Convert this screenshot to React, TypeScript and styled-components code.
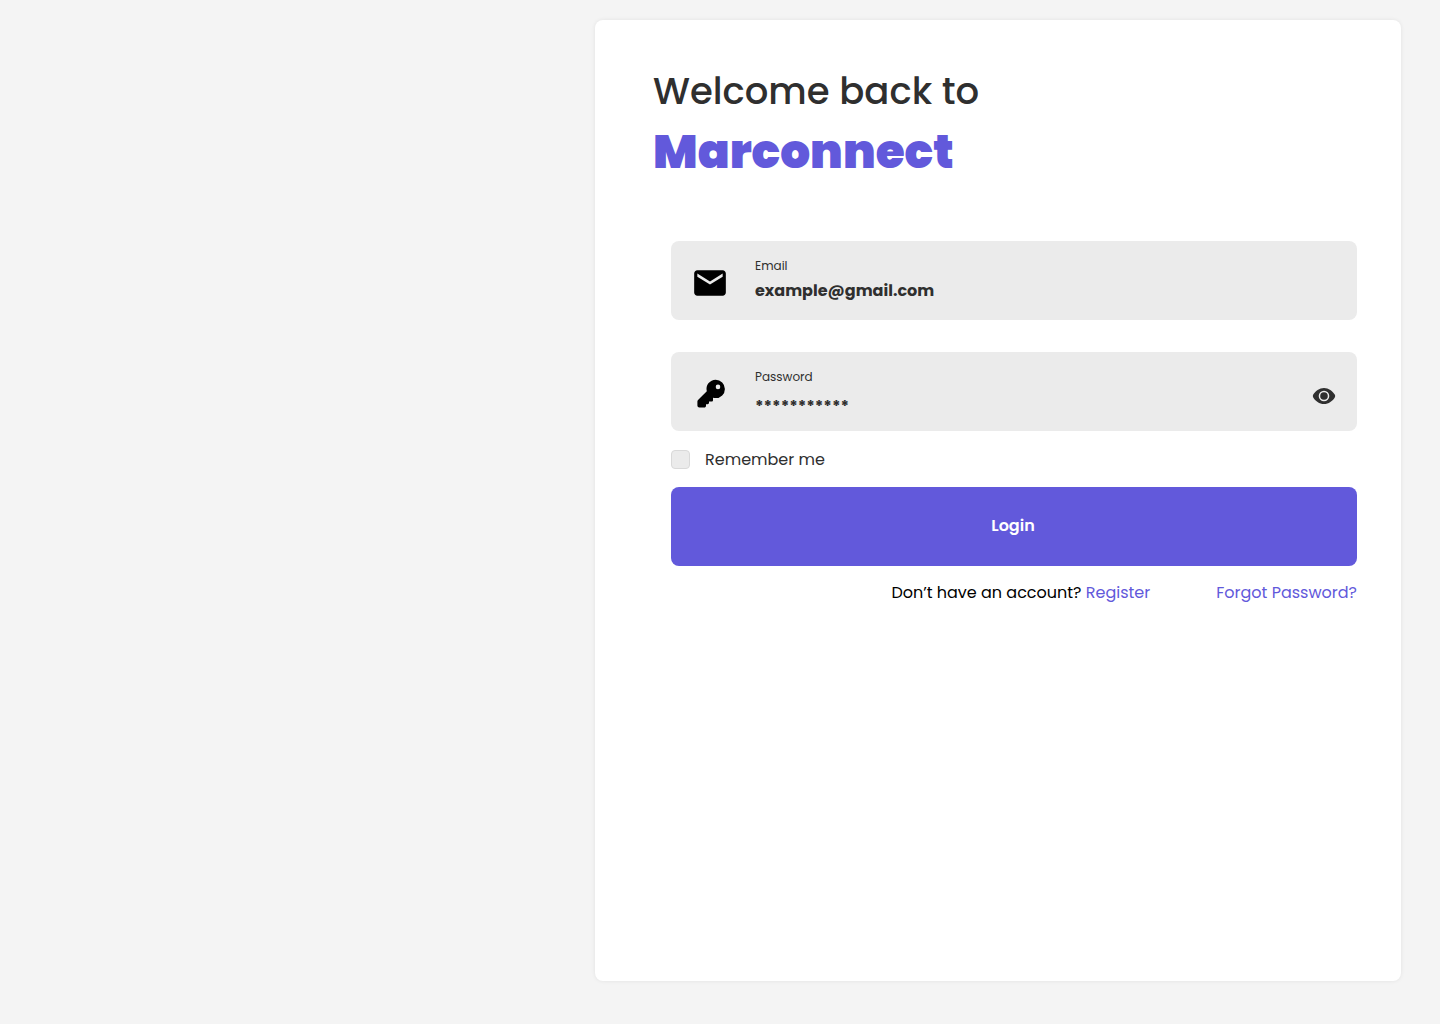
import React, { useId, useState } from "react";
import styled, { createGlobalStyle } from "styled-components";
import { MdEmail } from "react-icons/md";

const color = {
  page: "#f4f4f4",
  card: "#ffffff",
  field: "#ebebeb",
  ink: "#2f2f2f",
  accent: "#6259db",
};

const GlobalStyle = createGlobalStyle`
  *, *::before, *::after { box-sizing: border-box; }
  body {
    margin: 0;
    background: ${color.page};
    color: ${color.ink};
    font-family: Poppins, Inter, "Open Sans", sans-serif;
    font-size: 16px;
    line-height: 24px;
  }
`;

const Page = styled.main`
  display: flex;
  justify-content: flex-end;
  min-height: 100vh;
  padding: 20px 39px 43px 20px;
`;

const Card = styled.section`
  flex: 0 1 806px;
  padding: 44px 44px 44px 58px;
  border-radius: 8px;
  background: ${color.card};
  box-shadow: 0 0 4px rgba(0, 0, 0, 0.08);
`;

const Title = styled.h1`
  margin: 0;
  font-size: 37px;
  font-weight: 500;
  line-height: 54px;
`;

const Brand = styled.span`
  display: block;
  color: ${color.accent};
  font-size: 47px;
  font-weight: 900;
  line-height: 68px;
`;

const Form = styled.form`
  display: flex;
  flex-direction: column;
  margin: 55px 0 0 18px;
`;

const FieldBox = styled.div`
  display: flex;
  align-items: center;
  height: 79px;
  margin-bottom: 32px;
  padding: 0 21px 0 20px;
  border-radius: 8px;
  background: ${color.field};

  & + & {
    margin-bottom: 16px;
  }
`;

const FieldIcon = styled.span`
  display: flex;
  flex: none;
  justify-content: center;
  width: 38px;
  margin-right: 26px;
  padding-top: 4px;
  color: #000000;
`;

const FieldBody = styled.div`
  display: flex;
  flex: 1;
  flex-direction: column;
  min-width: 0;
`;

const FieldLabel = styled.label`
  font-size: 12px;
  line-height: 20px;
`;

const FieldInput = styled.input`
  width: 100%;
  height: 30px;
  padding: 0;
  border: 0;
  outline: 0;
  background: transparent;
  color: ${color.ink};
  font: inherit;
  font-weight: 700;

  &::placeholder {
    color: ${color.ink};
    opacity: 1;
  }

  &[placeholder^="*"] {
    padding-top: 10px;
  }
`;

const EyeButton = styled.button`
  display: flex;
  flex: none;
  padding: 8px 0 0;
  border: 0;
  background: none;
  color: ${color.ink};
  cursor: pointer;
`;

const Remember = styled.label`
  display: flex;
  align-items: flex-start;
  align-self: flex-start;
  gap: 15px;
  margin-bottom: 16px;
  line-height: 24px;
`;

const RememberText = styled.span`
  padding-top: 1px;
  line-height: 23px;
`;

const Tick = styled.input`
  appearance: none;
  width: 19px;
  height: 19px;
  margin: 3px 0 0;
  border: 1px solid #d9d9d9;
  border-radius: 4px;
  background: ${color.field};

  &:checked {
    background: ${color.accent};
  }
`;

const LoginButton = styled.button`
  height: 79px;
  padding: 0 2px 2px 0;
  border: 0;
  border-radius: 8px;
  background: ${color.accent};
  color: #ffffff;
  font: inherit;
  font-weight: 600;
  cursor: pointer;
`;

const Links = styled.div`
  display: flex;
  flex-wrap: wrap;
  justify-content: flex-end;
  gap: 8px 66px;
  margin-top: 15px;
  color: #000000;
`;

const TextLink = styled.a`
  color: ${color.accent};
  text-decoration: none;
`;

function KeyIcon() {
  return (
    <svg width="32" height="32" viewBox="0 0 32 32" fill="currentColor" aria-hidden="true">
      <path
        fillRule="evenodd"
        d="M21.700 1.700a9.200 9.200 0 0 0-8.900 11.600L4 22.100c-.4.4-.6.9-.6 1.500v3.900c0 1.100.9 2 2 2h4.800c1.100 0 1.800-.8 1.800-1.800v-1.500h1.600c.8 0 1.400-.6 1.400-1.400v-1.200h2.600c.8 0 1.400-.6 1.400-1.400v-2.400c.8.200 1.700.300 2.700.300a9.200 9.200 0 0 0 0-18.400Zm2.300 4.900a2.300 2.300 0 1 1 0 4.600 2.300 2.300 0 0 1 0-4.600Z"
      />
    </svg>
  );
}

function EyeIcon() {
  return (
    <svg width="24" height="24" viewBox="0 0 24 24" fill="currentColor" aria-hidden="true">
      <path
        fillRule="evenodd"
        d="M12 4C7.400 4 3.300 7 1.100 10.800c-.4.700-.4 1.700 0 2.400C3.300 17 7.400 20 12 20s8.700-3 10.900-6.800c.4-.7.4-1.700 0-2.400C20.700 7 16.600 4 12 4Zm0 2.700a5.300 5.300 0 1 1 0 10.600 5.300 5.300 0 0 1 0-10.600Z"
      />
      <circle cx="12" cy="12" r="3.800" />
    </svg>
  );
}

type FieldProps = {
  label: string;
  type: string;
  placeholder: string;
  icon: React.ReactNode;
  children?: React.ReactNode;
};

function Field({ label, type, placeholder, icon, children }: FieldProps) {
  const id = useId();
  return (
    <FieldBox>
      <FieldIcon>{icon}</FieldIcon>
      <FieldBody>
        <FieldLabel htmlFor={id}>{label}</FieldLabel>
        <FieldInput id={id} type={type} placeholder={placeholder} />
      </FieldBody>
      {children}
    </FieldBox>
  );
}

export default function App() {
  const [visible, setVisible] = useState(false);
  return (
    <>
      <GlobalStyle />
      <Page>
        <Card>
          <Title>
            Welcome back to <Brand>Marconnect</Brand>
          </Title>
          <Form onSubmit={(event) => event.preventDefault()}>
            <Field
              label="Email"
              type="email"
              placeholder="example@gmail.com"
              icon={<MdEmail size={38} />}
            />
            <Field
              label="Password"
              type={visible ? "text" : "password"}
              placeholder="***********"
              icon={<KeyIcon />}
            >
              <EyeButton
                type="button"
                aria-label="Show password"
                onClick={() => setVisible(!visible)}
              >
                <EyeIcon />
              </EyeButton>
            </Field>
            <Remember>
              <Tick type="checkbox" />
              <RememberText>Remember me</RememberText>
            </Remember>
            <LoginButton type="submit">Login</LoginButton>
            <Links>
              <span>
                Don’t have an account? <TextLink href="#register">Register</TextLink>
              </span>
              <TextLink href="#forgot">Forgot Password?</TextLink>
            </Links>
          </Form>
        </Card>
      </Page>
    </>
  );
}
